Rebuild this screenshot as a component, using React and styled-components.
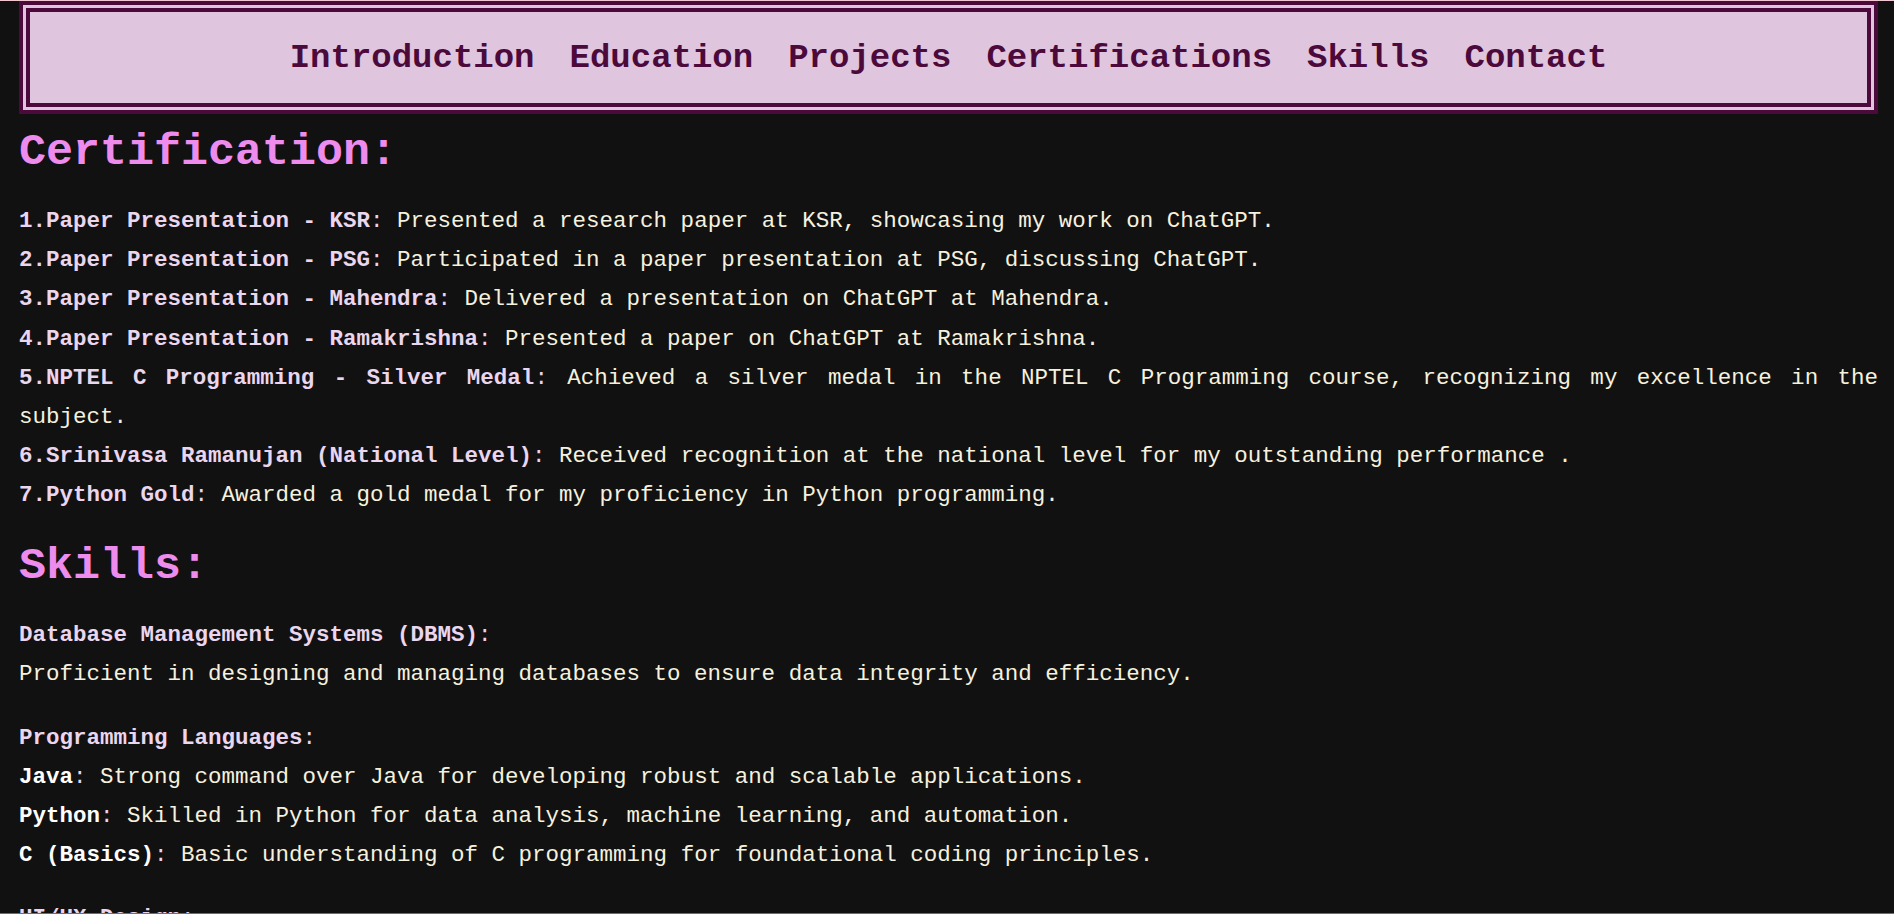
import React from "react";
import styled, { createGlobalStyle } from "styled-components";

const GlobalStyle = createGlobalStyle`
  html, body {
    margin: 0;
    padding: 0;
    background: #111111;
  }
  body {
    border-top: 1px solid #f3c7d1;
    font-family: "Liberation Mono", "Courier New", monospace;
  }
`;

const Page = styled.div`
  padding: 0 16px 0 19px;
  color: #e9d5ec;
`;

const Nav = styled.nav`
  box-sizing: border-box;
  height: 113px;
  background: #e0c5df;
  border: 11px double #4b0a3b;
  display: flex;
  justify-content: center;
  align-items: center;
  gap: 35px;
`;

const NavLink = styled.a`
  font-family: "Liberation Mono", "Courier New", monospace;
  font-size: 34px;
  font-weight: 700;
  color: #4b0a3b;
  text-decoration: none;
  line-height: 1;
`;

const SectionTitle = styled.h2`
  margin: ${(p) => (p.$first ? "12.5px" : "25px")} 0 24.5px;
  font-size: 45px;
  line-height: 51px;
  font-weight: 700;
  color: #ee8cee;
`;

const Group = styled.div`
  margin: 0 0 24px;
  font-size: 22.5px;
  line-height: 39.2px;
  text-align: justify;
`;

const Line = styled.p`
  margin: 0;
  color: #e9d5ec;
`;

const Label = styled.strong`
  font-weight: 700;
  color: ${(p) => (p.$bright ? "#ffffff" : "#ead6ee")};
`;

const Desc = styled.span`
  color: #f6f1df;
`;

const BottomRule = styled.div`
  position: fixed;
  left: 0;
  right: 0;
  bottom: 0;
  height: 1px;
  background: #6e6e6e;
`;

const navItems = [
  "Introduction",
  "Education",
  "Projects",
  "Certifications",
  "Skills",
  "Contact",
];

const certifications = [
  ["1.Paper Presentation - KSR", "Presented a research paper at KSR, showcasing my work on ChatGPT."],
  ["2.Paper Presentation - PSG", "Participated in a paper presentation at PSG, discussing ChatGPT."],
  ["3.Paper Presentation - Mahendra", "Delivered a presentation on ChatGPT at Mahendra."],
  ["4.Paper Presentation - Ramakrishna", "Presented a paper on ChatGPT at Ramakrishna."],
  [
    "5.NPTEL C Programming - Silver Medal",
    "Achieved a silver medal in the NPTEL C Programming course, recognizing my excellence in the subject.",
  ],
  [
    "6.Srinivasa Ramanujan (National Level)",
    "Received recognition at the national level for my outstanding performance .",
  ],
  ["7.Python Gold", "Awarded a gold medal for my proficiency in Python programming."],
];

const languages = [
  ["Java", "Strong command over Java for developing robust and scalable applications."],
  ["Python", "Skilled in Python for data analysis, machine learning, and automation."],
  ["C (Basics)", "Basic understanding of C programming for foundational coding principles."],
];

export default function App() {
  return (
    <>
      <GlobalStyle />
      <Page>
        <Nav>
          {navItems.map((item) => (
            <NavLink key={item} href={`#${item.toLowerCase()}`}>
              {item}
            </NavLink>
          ))}
        </Nav>

        <SectionTitle $first id="certifications">
          Certification:
        </SectionTitle>
        <Group>
          {certifications.map(([label, desc]) => (
            <Line key={label}>
              <Label>{label}</Label>: <Desc>{desc}</Desc>
            </Line>
          ))}
        </Group>

        <SectionTitle id="skills">Skills:</SectionTitle>
        <Group>
          <Line>
            <Label>Database Management Systems (DBMS)</Label>:
          </Line>
          <Line>
            <Desc>
              Proficient in designing and managing databases to ensure data integrity and efficiency.
            </Desc>
          </Line>
        </Group>
        <Group>
          <Line>
            <Label>Programming Languages</Label>:
          </Line>
          {languages.map(([label, desc]) => (
            <Line key={label}>
              <Label $bright>{label}</Label>: <Desc>{desc}</Desc>
            </Line>
          ))}
        </Group>
        <Group>
          <Line>
            <Label>UI/UX Design</Label>:
          </Line>
          <Line>
            <Desc>
              Creating intuitive and visually appealing user interfaces with a focus on user experience.
            </Desc>
          </Line>
        </Group>
      </Page>
      <BottomRule />
    </>
  );
}
